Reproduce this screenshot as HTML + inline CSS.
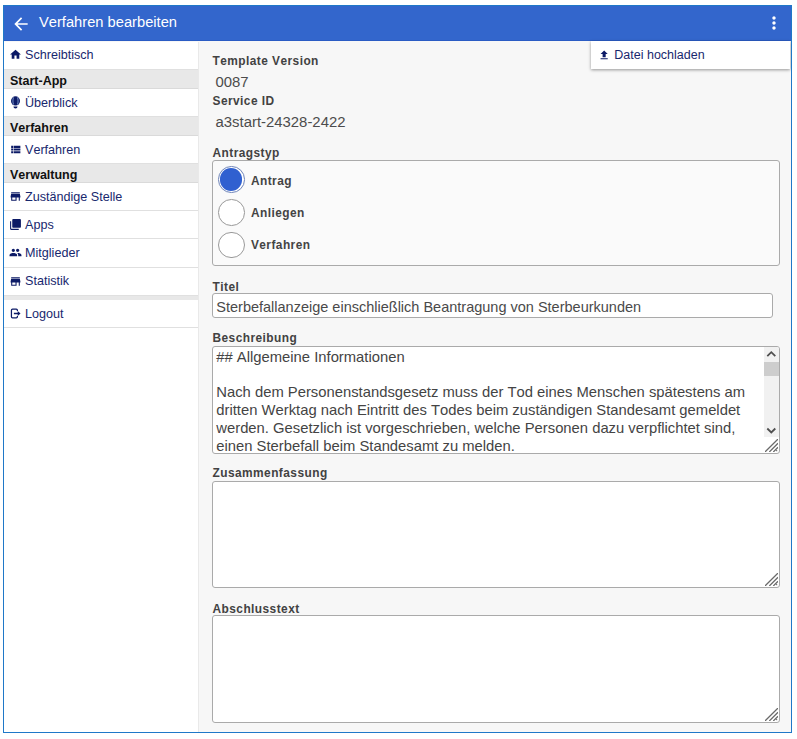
<!DOCTYPE html>
<html lang="de">
<head>
<meta charset="utf-8">
<title>Verfahren bearbeiten</title>
<style>
*{box-sizing:border-box;margin:0;padding:0}
html,body{width:797px;height:739px;background:#fff;overflow:hidden}
body{font-family:"Liberation Sans",sans-serif;position:relative;font-kerning:none}
#frame{position:absolute;left:3px;top:5px;width:789px;height:728px;border:1px solid #1f78c8;background:#f7f7f7;overflow:hidden}
#hdr{position:absolute;left:0;top:-1px;width:788px;height:36px;background:#3366cc;border-bottom:1px solid #2a5cc4;color:#fff}
#hdr .ttl{position:absolute;left:35px;top:9px;font-size:14.7px;line-height:17px;white-space:nowrap}
#hdr svg{position:absolute;fill:#fff}
#side{position:absolute;left:0;top:36px;width:195px;height:691px;background:#fff;border-right:1px solid #e9e9e9}
.it{position:relative;height:28.4px;border-bottom:1px solid #e0e0e0;color:#18286e;font-size:12.6px;line-height:15px;white-space:nowrap}
.it span{position:absolute;left:21px;top:6.6px}
.it svg{position:absolute;left:5px;top:6.7px;width:13px;height:13px;fill:#0c1a66}
.sh{height:18.5px;background:#e8e8e8;border-bottom:1px solid #dadada;color:#111;font-weight:bold;font-size:12.5px;line-height:15px;padding:4px 0 0 6px;white-space:nowrap}
.gap{height:4px;background:#e8e8e8}
#main{position:absolute;left:196px;top:35px;width:592px;height:691px}
.lbl{position:absolute;left:12.500px;margin-top:1px;font-weight:bold;font-size:11.9px;letter-spacing:.45px;color:#424242;line-height:14px;white-space:nowrap}
.val{position:absolute;left:15.500px;margin-top:1.500px;font-size:14.900px;color:#4c4c4c;line-height:17px;white-space:nowrap}
#menu{position:absolute;left:587.300px;top:35px;width:199px;height:28px;background:#fff;box-shadow:0 1px 3px rgba(0,0,0,.4);color:#18286e;font-size:12.5px;line-height:15px}
#menu span{position:absolute;left:23px;top:6.800px;white-space:nowrap}
#menu svg{position:absolute;left:6.300px;top:8.300px;width:12.300px;height:12.300px;fill:#0c1a66}
fieldset.rg{position:absolute;left:12px;top:119px;width:568px;height:106px;border:1px solid #aaa;border-radius:3px;background:#fafafa}
.rd{position:absolute;left:5.100px;width:26.500px;height:26.500px;border-radius:50%;border:1px solid #999;background:#fff}
.rd.on{border-color:#6d83b8}
.rd.on i{position:absolute;left:1.100px;top:1.100px;width:22.300px;height:22.300px;border-radius:50%;background:#3060d0}
.rl{position:absolute;left:37.900px;font-weight:bold;font-size:11.9px;letter-spacing:.45px;color:#444;line-height:14px;white-space:nowrap}
.inp{position:absolute;left:12px;top:252px;width:561px;height:25px;border:1px solid #aaa;border-radius:3px;background:#fff;font-size:14.500px;line-height:26.600px;color:#4a4a4a;padding-left:3.300px;white-space:nowrap;overflow:hidden}
.ta{position:absolute;left:12px;width:568px;border:1px solid #aaa;border-radius:3px;background:#fff;font-size:14.8px;line-height:17.7px;color:#444;overflow:hidden}
.ta .tx{position:absolute;left:3.300px;top:2px;width:545px;white-space:pre}
.rsz{position:absolute;right:1px;bottom:1px;width:13px;height:13px}
.sb{position:absolute;right:0;top:0;width:15px;height:90px;background:#f1f1f1}
.sb i{position:absolute;left:0;top:14.600px;width:15px;height:14.400px;background:#cdcdcd}
.sb svg{position:absolute;left:0;width:14.500px;height:14.500px;fill:none;stroke:#505050;stroke-width:1.800}
</style>
</head>
<body>
<div id="frame">
  <div id="side">
    <div class="it"><svg viewBox="0 0 24 24" style="top:5.700px"><path d="M10 20v-6h4v6h5v-8h3L12 3 2 12h3v8z"/></svg><span style="top:5.600px">Schreibtisch</span></div>
    <div class="sh">Start-App</div>
    <div class="it"><svg viewBox="0 0 24 24"><ellipse cx="12" cy="9.100" rx="8.300" ry="8.600"/><path d="M8.300 2.500c-1.400 4-1.400 9.500 0 13.200M15.700 2.500c1.400 4 1.400 9.500 0 13.200" fill="none" stroke="#a4c4f2" stroke-width="1.300"/><path d="M8.300 19.300h7.400c0 2.100-1.500 3.600-3.700 3.600s-3.700-1.500-3.700-3.600z"/></svg><span style="top:7.600px">Überblick</span></div>
    <div class="sh">Verfahren</div>
    <div class="it"><svg viewBox="0 0 24 24" style="top:7.400px"><path d="M4 14h4v-4H4v4zm0 5h4v-4H4v4zM4 9h4V5H4v4zm5 5h12v-4H9v4zm0 5h12v-4H9v4zM9 5v4h12V5H9z"/></svg><span style="top:7.500px">Verfahren</span></div>
    <div class="sh">Verwaltung</div>
    <div class="it"><svg viewBox="0 0 24 24" style="top:7.800px"><path d="M20 4H4v2h16V4zm1 10v-2l-1-5H4l-1 5v2h1v6h10v-6h4v6h2v-6h1zm-9 4H6v-4h6v4z"/></svg><span style="top:7.800px">Zuständige Stelle</span></div>
    <div class="it"><svg viewBox="0 0 24 24"><path d="M4 6H2v14c0 1.1.9 2 2 2h14v-2H4V6zm16-4H8c-1.1 0-2 .9-2 2v12c0 1.1.9 2 2 2h12c1.1 0 2-.9 2-2V4c0-1.1-.9-2-2-2z"/></svg><span>Apps</span></div>
    <div class="it"><svg viewBox="0 0 24 24"><path d="M16 11c1.66 0 2.99-1.34 2.99-3S17.66 5 16 5c-1.66 0-3 1.34-3 3s1.34 3 3 3zm-8 0c1.66 0 2.99-1.34 2.99-3S9.66 5 8 5C6.34 5 5 6.34 5 8s1.34 3 3 3zm0 2c-2.33 0-7 1.17-7 3.5V19h14v-2.500c0-2.33-4.670-3.500-7-3.500zm8 0c-.29 0-.62.020-.97.050 1.160.84 1.970 1.970 1.970 3.450V19h6v-2.500c0-2.330-4.670-3.500-7-3.500z"/></svg><span>Mitglieder</span></div>
    <div class="it"><svg viewBox="0 0 24 24"><path d="M20 4H4v2h16V4zm1 10v-2l-1-5H4l-1 5v2h1v6h10v-6h4v6h2v-6h1zm-9 4H6v-4h6v4z"/></svg><span>Statistik</span></div>
    <div class="gap"></div>
    <div class="it" style="height:27.600px"><svg viewBox="0 0 24 24"><path d="M15.500 7.500V5.800c0-1.100-.9-2-2-2h-7c-1.100 0-2 .9-2 2v12.400c0 1.100.9 2 2 2h7c1.100 0 2-.9 2-2v-1.700" fill="none" stroke="#0c1a66" stroke-width="2.300"/><path d="M9 10.400h7V7.300l5.300 4.700-5.300 4.700v-3.100H9z"/></svg><span>Logout</span></div>
  </div>
  <div id="main">
    <div class="lbl" style="top:12px">Template Version</div>
    <div class="val" style="top:31px">0087</div>
    <div class="lbl" style="top:52px">Service ID</div>
    <div class="val" style="top:71px">a3start-24328-2422</div>
    <div class="lbl" style="top:104px">Antragstyp</div>
    <fieldset class="rg">
      <div class="rd on" style="top:5.200px"><i></i></div><div class="rl" style="top:12.500px">Antrag</div>
      <div class="rd" style="top:38px"></div><div class="rl" style="top:45px">Anliegen</div>
      <div class="rd" style="top:70.600px"></div><div class="rl" style="top:77px">Verfahren</div>
    </fieldset>
    <div class="lbl" style="top:238px">Titel</div>
    <div class="inp">Sterbefallanzeige einschließlich Beantragung von Sterbeurkunden</div>
    <div class="lbl" style="top:289px">Beschreibung</div>
    <div class="ta" style="top:305px;height:108px"><div class="tx">## Allgemeine Informationen

Nach dem Personenstandsgesetz muss der Tod eines Menschen spätestens am
dritten Werktag nach Eintritt des Todes beim zuständigen Standesamt gemeldet
werden. Gesetzlich ist vorgeschrieben, welche Personen dazu verpflichtet sind,
einen Sterbefall beim Standesamt zu melden.</div>
      <div class="sb"><svg viewBox="0 0 14.500 14.500" style="top:0"><path d="M3.300 9.200L7.300 5.200l4 4"/></svg><i></i><svg viewBox="0 0 14.500 14.500" style="top:75.500px"><path d="M3.300 5.500l4 4 4-4"/></svg></div>
      <svg class="rsz" viewBox="0 0 13 13"><path d="M0 13L13 0M4.300 13L13 4.300M8.300 13L13 8.300" stroke="#6a6a6a" stroke-width="1.250" fill="none"/><rect x="11" y="11" width="1.200" height="1.200" fill="#7a7a7a"/></svg>
    </div>
    <div class="lbl" style="top:424.200px">Zusammenfassung</div>
    <div class="ta" style="top:440px;height:107px"><svg class="rsz" viewBox="0 0 13 13"><path d="M0 13L13 0M4.300 13L13 4.300M8.300 13L13 8.300" stroke="#6a6a6a" stroke-width="1.250" fill="none"/><rect x="11" y="11" width="1.200" height="1.200" fill="#7a7a7a"/></svg></div>
    <div class="lbl" style="top:559.800px">Abschlusstext</div>
    <div class="ta" style="top:574px;height:108px"><svg class="rsz" viewBox="0 0 13 13"><path d="M0 13L13 0M4.300 13L13 4.300M8.300 13L13 8.300" stroke="#6a6a6a" stroke-width="1.250" fill="none"/><rect x="11" y="11" width="1.200" height="1.200" fill="#7a7a7a"/></svg></div>
  </div>
  <div id="hdr">
    <svg viewBox="0 0 24 24" style="left:7px;top:8.700px;width:20px;height:20px"><path d="M20 11H7.830l5.590-5.590L12 4l-8 8 8 8 1.410-1.410L7.830 13H20v-2z"/></svg>
    <div class="ttl">Verfahren bearbeiten</div>
    <svg viewBox="0 0 24 24" style="left:759.500px;top:8px;width:20px;height:20px"><path d="M12 8c1.100 0 2-.9 2-2s-.9-2-2-2-2 .9-2 2 .9 2 2 2zm0 2c-1.100 0-2 .9-2 2s.9 2 2 2 2-.9 2-2-.9-2-2-2zm0 6c-1.100 0-2 .9-2 2s.9 2 2 2 2-.9 2-2-.9-2-2-2z"/></svg>
  </div>
  <div id="menu"><svg viewBox="0 0 24 24"><path d="M9 16h6v-6h4l-7-7-7 7h4zm-4 2h14v2H5z"/></svg><span>Datei hochladen</span></div>
</div>
</body>
</html>
